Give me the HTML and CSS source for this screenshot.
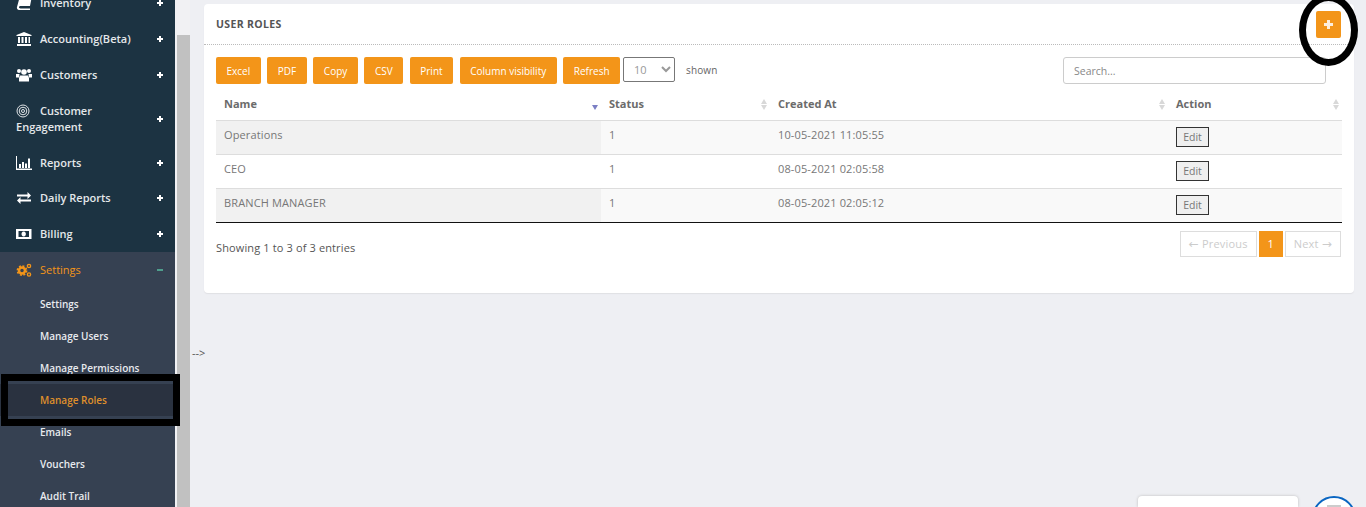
FILE: index.html
```html
<!DOCTYPE html>
<html lang="en">

<head>
  <meta charset="UTF-8">
  <meta name="viewport" content="width=device-width, initial-scale=1.0">
  <title>User Roles</title>
  <link rel="stylesheet" href="styles.css">
</head>

<body>
  <div class="shell">
    <nav class="sidebar">
      <ul class="menu">
        <li class="menu-item">
          <span class="menu-label"><svg class="ico" viewBox="0 0 16 14"><path d="M4 0h12l-2 10H4.500C3.500 10 3 10.700 3 11.300S3.500 12.500 4.500 12.500H14V14H3C1.500 14 .5 12.700 1 11z" fill="#fff"/></svg>Inventory</span><span class="toggle"></span>
        </li>
        <li class="menu-item">
          <span class="menu-label"><svg class="ico" viewBox="0 0 16 14"><path d="M8 0l7.500 3v1H.5V3zM2 5h2v6H2zM5.500 5h2v6h-2zM9 5h2v6H9zM12.500 5h1.500v6h-1.500zM1 12h14v2H1z" fill="#fff"/></svg>Accounting(Beta)</span><span class="toggle"></span>
        </li>
        <li class="menu-item">
          <span class="menu-label"><svg class="ico" viewBox="0 0 16 14"><g fill="#fff"><circle cx="3" cy="3" r="2"/><circle cx="13" cy="3" r="2"/><circle cx="8" cy="4" r="2.800"/><path d="M0 6h3.500L3 9.500H0zM16 6h-3.500l.5 3.500h3zM4 7.500h8l1 2.500v3.500H3V10z"/></g></svg>Customers</span><span class="toggle"></span>
        </li>
        <li class="menu-item menu-item-tall">
          <span class="menu-label"><svg class="ico" viewBox="0 0 16 14"><g fill="none" stroke="#dfe3e6"><circle cx="7" cy="7" r="6"/><circle cx="7" cy="7" r="3.800"/><circle cx="7" cy="7" r="1.500"/></g></svg>Customer Engagement</span><span class="toggle"></span>
        </li>
        <li class="menu-item">
          <span class="menu-label"><svg class="ico" viewBox="0 0 16 14"><path d="M0 0h1v12.500h15V14H0zM3 8h2v4H3zM6 6h2v6H6zM9 7.500h2V12H9zM12 2.500h2V12h-2z" fill="#fff"/></svg>Reports</span><span class="toggle"></span>
        </li>
        <li class="menu-item menu-item-short">
          <span class="menu-label"><svg class="ico" viewBox="0 0 16 14"><path d="M1 3.500h10.500V1L15 4.500 11.500 8V5.500H1zM15 8.500H4.500V6L1 9.500 4.500 13v-2.500H15z" fill="#fff"/></svg>Daily Reports</span><span class="toggle"></span>
        </li>
        <li class="menu-item">
          <span class="menu-label"><svg class="ico" viewBox="0 0 16 14"><path fill-rule="evenodd" d="M0 2h15.500v10H0zM2.500 4v6h10.500V4zM7.700 4.500a2.200 2.500 0 1 1-.01 0z" fill="#fff"/></svg>Billing</span><span class="toggle"></span>
        </li>
        <li class="menu-item menu-item-open">
          <span class="menu-label"><svg class="ico" viewBox="0 0 16 14"><g fill="none" stroke="#f39519"><circle cx="6" cy="7.500" r="3" stroke-width="2.500"/><circle cx="6" cy="7.500" r="4.600" stroke-width="1.600" stroke-dasharray="2 1.600"/><circle cx="13" cy="3" r="1.600" stroke-width="1.400"/><circle cx="13" cy="11.500" r="1.600" stroke-width="1.400"/></g></svg>Settings</span><span class="toggle-open"></span>
        </li>
        <li class="sub-item">Settings</li>
        <li class="sub-item">Manage Users</li>
        <li class="sub-item">Manage Permissions</li>
        <li class="sub-item sub-item-active">Manage Roles</li>
        <li class="sub-item">Emails</li>
        <li class="sub-item">Vouchers</li>
        <li class="sub-item">Audit Trail</li>
      </ul>
    </nav>

    <div class="rail">
      <div class="thumb"></div>
    </div>

    <main class="main">
      <section class="card">
        <header class="card-head">
          <h1 class="card-title">USER ROLES</h1>
          <button class="add-btn"><span class="plus"></span></button>
        </header>

        <div class="card-body">
          <div class="tools">
            <div class="tool-buttons">
              <button class="tool-btn">Excel</button>
              <button class="tool-btn">PDF</button>
              <button class="tool-btn">Copy</button>
              <button class="tool-btn">CSV</button>
              <button class="tool-btn">Print</button>
              <button class="tool-btn">Column visibility</button>
              <button class="tool-btn">Refresh</button>
            </div>
            <select class="page-size">
              <option>10</option>
            </select>
            <span class="shown">shown</span>
            <input class="search" type="text" placeholder="Search...">
          </div>

          <table class="roles">
            <thead>
              <tr>
                <th class="col-name sort-active">Name</th>
                <th class="col-status">Status</th>
                <th class="col-created">Created At</th>
                <th class="col-action">Action</th>
              </tr>
            </thead>
            <tbody>
              <tr class="odd">
                <td class="cell-sorted">Operations</td>
                <td class="cell-status">1</td>
                <td>10-05-2021 11:05:55</td>
                <td><button class="edit-btn">Edit</button></td>
              </tr>
              <tr>
                <td class="cell-sorted">CEO</td>
                <td class="cell-status">1</td>
                <td>08-05-2021 02:05:58</td>
                <td><button class="edit-btn">Edit</button></td>
              </tr>
              <tr class="odd">
                <td class="cell-sorted">BRANCH MANAGER</td>
                <td class="cell-status">1</td>
                <td>08-05-2021 02:05:12</td>
                <td><button class="edit-btn">Edit</button></td>
              </tr>
            </tbody>
          </table>

          <div class="table-foot">
            <span class="info">Showing 1 to 3 of 3 entries</span>
            <div class="pager">
              <span class="page-link"><span class="arrow">←</span> Previous</span>
              <span class="page-link page-current">1</span>
              <span class="page-link">Next <span class="arrow">→</span></span>
            </div>
          </div>
        </div>
      </section>

      <p class="stray">--&gt;</p>
    </main>
  </div>

  <!-- annotations drawn on top of the screenshot -->
  <div class="mark-rect"></div>
  <div class="mark-ellipse"></div>

  <div class="chat-box"></div>
  <div class="chat-bubble"><span class="chat-glyph"></span></div>
</body>

</html>
```

FILE: styles.css
```css
* {
  box-sizing: border-box;
}

html,
body {
  height: 507px;
  margin: 0;
  overflow: hidden;
}

body {
  background: #eeeff3;
  color: #555;
  font-family: "Open Sans", "Liberation Sans", sans-serif;
  font-size: 11px;
}

button,
input,
select {
  font-family: inherit;
}

.shell {
  display: flex;
  height: 507px;
}

/* sidebar */
.sidebar {
  width: 175px;
  flex-shrink: 0;
  background: #1c3342;
  overflow: hidden;
}

.menu {
  list-style: none;
  margin: -15px 0 0;
  padding: 0;
}

.menu-item {
  display: flex;
  align-items: center;
  justify-content: space-between;
  min-height: 36px;
  padding: 0 12px 0 16px;
  color: #e4e8ea;
  font-weight: 600;
  line-height: 16px;
}

.menu-item-tall {
  height: 52px;
}

.menu-item-short {
  min-height: 35px;
  padding-bottom: 1px;
}

.menu-label {
  display: block;
  width: 125px;
}

.ico {
  display: inline-block;
  width: 16px;
  height: 14px;
  margin-right: 8px;
  vertical-align: -3px;
}

/* small bold plus, built from two bars */
.toggle {
  position: relative;
  width: 6px;
  height: 6px;
  background:
    linear-gradient(#fff, #fff) center / 6px 2px no-repeat,
    linear-gradient(#fff, #fff) center / 2px 6px no-repeat;
}

.toggle-open {
  width: 6px;
  height: 2px;
  background: #4f9e8d;
}

.menu-item-open {
  background: #364152;
  color: #f39519;
  font-weight: 400;
}

.sub-item {
  height: 32px;
  padding-left: 40px;
  background: #364152;
  color: #e8eaee;
  font-size: 10px;
  font-weight: 600;
  line-height: 32px;
}

.sub-item-active {
  background: #2a3240;
  color: #df8f2c;
}

/* page scrollbar */
.rail {
  display: flex;
  width: 15px;
  flex-shrink: 0;
  padding: 35px 0 0 2px;
  background: #f1f1f3;
}

.thumb {
  flex: 1;
  background: #c1c1c1;
}

/* content */
.main {
  flex: 1;
  min-width: 0;
  padding: 4px 12px 0 2px;
}

.card {
  height: 289px;
  margin-left: 12px;
  background: #fff;
  border-radius: 4px;
  box-shadow: 0 1px 1px #dfe0e4;
}

.card-head {
  display: flex;
  align-items: center;
  justify-content: space-between;
  height: 41px;
  padding: 0 13px 0 12px;
  border-bottom: 1px dotted #bbb;
}

.card-title {
  margin: 0;
  color: #555;
  font-size: 10.500px;
  font-weight: 700;
  letter-spacing: .35px;
}

.add-btn {
  display: flex;
  align-items: center;
  justify-content: center;
  width: 25px;
  height: 27px;
  padding: 0;
  border: 0;
  border-radius: 2px;
  background: #f39519;
}

.plus {
  width: 9px;
  height: 9px;
  background:
    linear-gradient(#fdeedd, #fdeedd) center / 9px 3px no-repeat,
    linear-gradient(#fdeedd, #fdeedd) center / 3px 9px no-repeat;
}

.card-body {
  padding: 12px 12px 0;
}

.tools {
  display: flex;
  align-items: flex-start;
}

.tool-buttons {
  display: flex;
  gap: 6.600px;
}

.tool-btn {
  height: 27px;
  padding: 0 10.500px;
  border: 0;
  border-radius: 2px;
  background: #f39519;
  color: #fff;
  font-size: 10px;
  font-weight: 400;
}

.page-size {
  width: 52px;
  height: 25px;
  margin-left: 3px;
  padding-left: 6px;
  border: 1px solid #777;
  border-radius: 2px;
  background: #fff;
  color: #999;
  font-size: 11px;
}

.shown {
  margin-left: 11px;
  color: #666;
  font-size: 10px;
  letter-spacing: .1px;
  line-height: 26px;
}

.search {
  width: 263px;
  height: 27px;
  margin-left: auto;
  margin-right: 16px;
  padding: 0 10px;
  border: 1px solid #ccc;
  border-radius: 3px;
  font-size: 10.500px;
}

.search::placeholder {
  color: #888;
}

/* table */
.roles {
  width: 1126px;
  border-collapse: collapse;
  table-layout: fixed;
  border-bottom: 1px solid #111;
}

.roles th {
  position: relative;
  height: 36px;
  padding: 3px 8px 0;
  border-bottom: 1px solid #ddd;
  color: #6b6b6b;
  font-size: 11px;
  font-weight: 700;
  text-align: left;
}

/* sort arrows: two small triangles */
.roles th::before,
.roles th::after {
  content: "";
  position: absolute;
  right: 3px;
  border-left: 3.500px solid transparent;
  border-right: 3.500px solid transparent;
}

.roles th::before {
  top: 15px;
  border-bottom: 5px solid #d8d8d8;
}

.roles th::after {
  top: 21px;
  border-top: 5px solid #d8d8d8;
}

.roles th.sort-active::before {
  display: none;
}

.roles th.sort-active::after {
  border-top-color: #7b7fc4;
}

.col-name {
  width: 385px;
}

.col-status {
  width: 169px;
}

.col-created {
  width: 398px;
}

.roles td {
  height: 34px;
  padding: 0 8px 6px;
  border-bottom: 1px solid #ddd;
  color: #777;
  font-size: 11px;
  letter-spacing: .13px;
}

.roles tr:last-child td {
  border-bottom: 0;
}

.odd td {
  background: #f9f9f9;
}

.odd .cell-sorted {
  background: #f1f1f1;
}

.cell-status {
  color: #6f6a96;
}

.edit-btn {
  display: block;
  width: 33px;
  height: 20px;
  margin-top: 6px;
  padding: 0;
  border: 1px solid #333;
  background: #efefef;
  color: #777;
  font-size: 10.500px;
}

.table-foot {
  display: flex;
  align-items: center;
  justify-content: space-between;
  padding: 8px 1px 0 0;
}

.info {
  padding-top: 8px;
  color: #555;
  font-size: 11px;
  letter-spacing: .13px;
}

.pager {
  display: flex;
  gap: 2px;
}

.page-link {
  height: 26px;
  padding: 0 8px;
  border: 1px solid #ddd;
  color: #ccc;
  font-size: 11px;
  letter-spacing: .2px;
  line-height: 24px;
}

.arrow {
  font-family: "DejaVu Sans", sans-serif;
  font-size: 12px;
}

.page-current {
  width: 24px;
  padding: 0;
  border-color: #f39519;
  background: #f39519;
  color: #fff;
  text-align: center;
}

.stray {
  margin: 53px 0 0;
  color: #555;
  font-size: 11px;
  line-height: 14px;
}

/* annotations */
.mark-rect {
  position: absolute;
  left: 1px;
  top: 374px;
  width: 179px;
  height: 52px;
  border: 7px solid #000;
}

.mark-ellipse {
  position: absolute;
  left: 1299px;
  top: -6px;
  width: 59px;
  height: 72px;
  border: 7px solid #000;
  border-radius: 50%;
}

/* chat widget at the page corner, cut by the window */
.chat-box {
  position: absolute;
  left: 1138px;
  top: 496px;
  width: 160px;
  height: 11px;
  border-radius: 4px 4px 0 0;
  background: #fff;
  box-shadow: 0 0 3px #bbb;
}

.chat-bubble {
  position: absolute;
  left: 1312px;
  top: 496px;
  width: 44px;
  height: 11px;
  overflow: hidden;
}

.chat-glyph {
  display: block;
  width: 44px;
  height: 44px;
  border: 2px solid #0a66c2;
  border-radius: 50%;
  background:
    linear-gradient(#ccc, #ccc) center 7px / 14px 2px no-repeat,
    #fff;
}
```
